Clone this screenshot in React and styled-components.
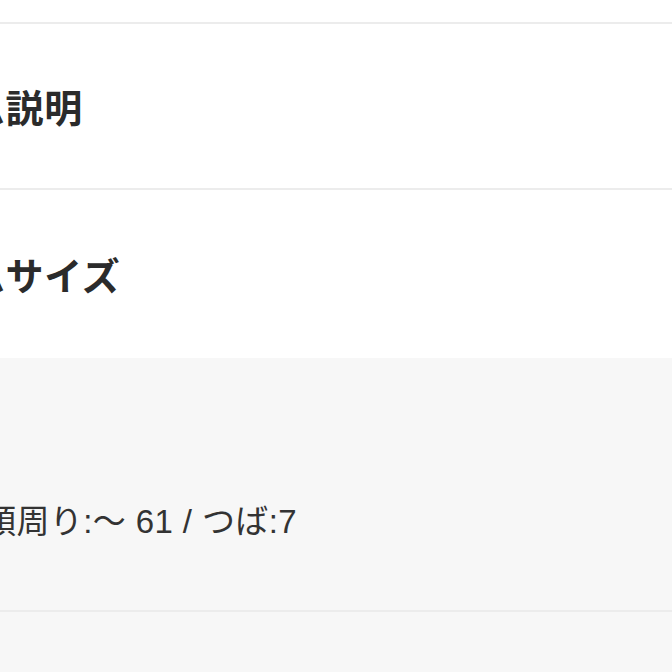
import React from 'react';
import styled, { createGlobalStyle } from 'styled-components';

const GlobalStyle = createGlobalStyle`
  html, body {
    margin: 0;
    padding: 0;
    background: #f7f7f7;
    font-family: "Noto Sans CJK JP", "Noto Sans", sans-serif;
    color: #333;
  }
`;

const Page = styled.div`
  width: 672px;
  height: 672px;
  overflow: hidden;
  background: #f7f7f7;
`;

const Sheet = styled.div`
  display: flex;
  flex-direction: column;
  margin-left: -145px;
`;

const TopStrip = styled.div`
  height: 22px;
  background: #fff;
  border-bottom: 2px solid #ececec;
`;

const Section = styled.section`
  height: ${p => p.$height}px;
  display: flex;
  align-items: center;
  background: #fff;
  border-bottom: ${p => (p.$divider ? '2px solid #ececec' : 'none')};
`;

const Heading = styled.h2`
  margin: 0;
  font-size: 38px;
  font-weight: 700;
  line-height: 1;
  letter-spacing: 0.6px;
  color: #2b2b2b;
  white-space: nowrap;
`;

const Detail = styled.div`
  height: 254px;
  display: flex;
  align-items: flex-end;
  padding-bottom: 72px;
  box-sizing: border-box;
  background: #f7f7f7;
  border-bottom: 2px solid #ececec;
`;

const Spec = styled.p`
  margin: 0;
  padding-left: 128px;
  font-family: "Liberation Sans", "Noto Sans CJK JP", sans-serif;
  font-size: 33px;
  line-height: 1;
  letter-spacing: 0.4px;
  color: #333;
  white-space: nowrap;
`;

const App = () => (
  <Page>
    <GlobalStyle />
    <Sheet>
      <TopStrip />
      <Section $height={164} $divider>
        <Heading>アイテム説明</Heading>
      </Section>
      <Section $height={168}>
        <Heading>アイテムサイズ</Heading>
      </Section>
      <Detail>
        <Spec>頭周り:〜 61 / つば:7</Spec>
      </Detail>
    </Sheet>
  </Page>
);

export default App;
